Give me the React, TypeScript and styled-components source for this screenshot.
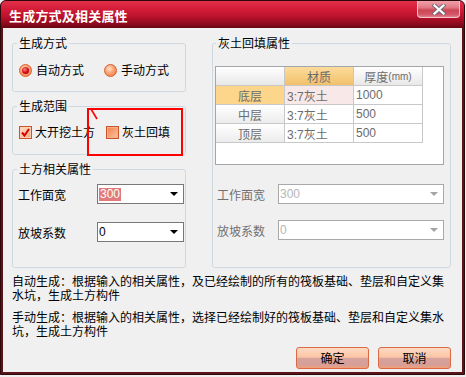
import React from 'react';
import styled, { createGlobalStyle } from 'styled-components';

const GlobalStyle = createGlobalStyle`
  html, body {
    margin: 0;
    padding: 0;
    background: #efefef;
  }
  body {
    font-family: "Liberation Sans", "Noto Sans CJK SC", sans-serif;
    font-size: 12px;
    color: #000;
  }
  * {
    box-sizing: border-box;
  }
`;

const Window = styled.div`
  width: 465px;
  height: 375px;
  display: flex;
  flex-direction: column;
  background: #5c141b;
  border: 1px solid #2e070b;
  border-radius: 6px 6px 0 0;
  overflow: hidden;
`;

const TitleBar = styled.div`
  height: 27px;
  flex: none;
  display: flex;
  align-items: flex-start;
  padding: 0 4px 0 8px;
  background: linear-gradient(to bottom, #e2304a 0%, #d41c38 30%, #ba122c 58%, #8e0a1e 84%, #6a0614 100%);
`;

const Title = styled.div`
  margin-top: 7px;
  color: #fff;
  font-family: "Noto Sans CJK SC", sans-serif;
  font-weight: 700;
  font-size: 13px;
  line-height: 16px;
  letter-spacing: 0.2px;
`;

const CloseButton = styled.div`
  margin-left: auto;
  width: 43px;
  height: 17px;
  display: flex;
  align-items: center;
  justify-content: center;
  border: 1px solid #f3c4ca;
  border-top: none;
  border-radius: 0 0 4px 4px;
  background: linear-gradient(to bottom, #f0a2aa 0%, #e27a86 40%, #cc4656 58%, #d45868 85%, #e48090 100%);
`;

const Client = styled.div`
  flex: 1;
  margin: 0 2px 2px 2px;
  background: #f0f0f0;
  padding: 8px 11px 3px 9px;
  display: flex;
  flex-direction: column;
`;

const TopArea = styled.div`
  height: 232px;
  flex: none;
  display: flex;
  gap: 26px;
`;

const LeftColumn = styled.div`
  width: 174px;
  flex: none;
  display: flex;
  flex-direction: column;
  gap: 7px;
  position: relative;
`;

const Group = styled.fieldset<{ $height?: number; $padLeft: number; $padRight: number }>`
  margin: 0;
  min-width: 0;
  padding: 0 ${p => p.$padRight}px 0 ${p => p.$padLeft}px;
  border: 1px solid #cfd8de;
  border-radius: 3px;
  ${p => (p.$height ? `height: ${p.$height}px; flex: none;` : 'flex: 1;')}
`;

const Legend = styled.legend<{ $shift?: number }>`
  padding: 0 2px;
  margin-left: ${p => p.$shift || 0}px;
  font-family: "Noto Sans CJK SC", sans-serif;
  font-size: 12px;
  line-height: 14px;
`;

const OptionRow = styled.div<{ $top: number; $gap: number }>`
  margin-top: ${p => p.$top}px;
  height: 14px;
  padding-left: 2px;
  display: flex;
  align-items: center;
  gap: ${p => p.$gap}px;
`;

const Option = styled.label<{ $gap: number }>`
  display: flex;
  align-items: center;
  gap: ${p => p.$gap}px;
  font-family: "Noto Sans CJK SC", sans-serif;
  line-height: 14px;
  white-space: nowrap;
`;

const Radio = styled.span<{ $checked?: boolean }>`
  width: 13px;
  height: 13px;
  flex: none;
  border-radius: 50%;
  display: flex;
  align-items: center;
  justify-content: center;
  border: 1px solid #d75d2b;
  background: radial-gradient(circle at 40% 35%, #ffe2cc 0%, #fba272 45%, #ee7440 100%);
  &::after {
    content: '';
    display: ${p => (p.$checked ? 'block' : 'none')};
    width: 7px;
    height: 7px;
    border-radius: 50%;
    background: radial-gradient(circle at 40% 35%, #ff8070 0%, #d00818 55%, #860008 100%);
  }
`;

const Check = styled.span<{ $checked?: boolean }>`
  width: 13px;
  height: 13px;
  flex: none;
  display: flex;
  align-items: center;
  justify-content: center;
  border: 1px solid #c9542a;
  background: ${p =>
    p.$checked
      ? 'linear-gradient(135deg, #fde0cc 0%, #f8a476 100%)'
      : 'linear-gradient(135deg, #f27e4a 0%, #fcc4a2 100%)'};
  box-shadow: inset 0 0 0 1px ${p => (p.$checked ? '#fbd0b4' : '#f9b08a')};
`;

const Mark = styled.div`
  position: absolute;
  left: 75px;
  top: 72px;
  width: 96px;
  height: 48px;
  border: 2px solid #ff0000;
  pointer-events: none;
`;

const MarkStroke = styled.svg`
  position: absolute;
  left: 0;
  top: -2px;
`;

const FieldList = styled.div<{ $top: number; $gap: number }>`
  margin-top: ${p => p.$top}px;
  display: flex;
  flex-direction: column;
  gap: ${p => p.$gap}px;
`;

const FieldRow = styled.div<{ $labelWidth: number }>`
  display: grid;
  grid-template-columns: ${p => p.$labelWidth}px 1fr;
  align-items: center;
  height: 20px;
`;

const FieldLabel = styled.span<{ $disabled?: boolean; $indent: number }>`
  padding-left: ${p => p.$indent}px;
  font-family: "Noto Sans CJK SC", sans-serif;
  color: ${p => (p.$disabled ? '#707070' : '#000')};
  white-space: nowrap;
`;

const Combo = styled.div<{ $disabled?: boolean }>`
  height: 20px;
  display: flex;
  align-items: center;
  padding: 0 5px 0 1px;
  background: #fff;
  border: 1px solid ${p => (p.$disabled ? '#a9a9a9' : '#787878')};
  font-family: "Liberation Sans", sans-serif;
  font-size: 12px;
  color: ${p => (p.$disabled ? '#b6b6b6' : '#000')};
`;

const ComboValue = styled.span`
  flex: 1;
  line-height: 14px;
`;

const Selected = styled.span`
  display: inline-block;
  padding: 0 1px;
  line-height: 13px;
  background: #e27a7a;
  color: #fff;
`;

const Arrow = styled.span<{ $disabled?: boolean }>`
  width: 0;
  height: 0;
  border-left: 4px solid transparent;
  border-right: 4px solid transparent;
  border-top: 4px solid ${p => (p.$disabled ? '#a4a4a4' : '#000')};
`;

const TableBox = styled.div`
  margin-top: 16px;
  height: 99px;
  background: #fff;
  border: 1px solid #a3a7ac;
`;

const Grid = styled.div`
  display: grid;
  width: max-content;
  grid-template-columns: repeat(3, 68px);
  grid-auto-rows: 18px;
  gap: 1px;
  background: #c8c8c8;
  border-right: 1px solid #c8c8c8;
  border-bottom: 1px solid #c8c8c8;
`;

type CellKind = 'head' | 'headActive' | 'rowHead' | 'rowHeadActive' | 'data' | 'dataActive';

const cellBg: Record<CellKind, string> = {
  head: 'linear-gradient(to bottom, #ffffff 0%, #e8e8e8 100%)',
  headActive: 'linear-gradient(to bottom, #fcdc9c 0%, #f2c06a 100%)',
  rowHead: 'linear-gradient(to bottom, #ffffff 0%, #ececec 100%)',
  rowHeadActive: '#fdd58b',
  data: '#ffffff',
  dataActive: '#f9e8e8',
};

const Cell = styled.div<{ $kind: CellKind }>`
  display: flex;
  align-items: center;
  justify-content: ${p => (p.$kind.startsWith('data') ? 'flex-start' : 'center')};
  padding-left: ${p => (p.$kind.startsWith('data') ? '2px' : '0')};
  background: ${p => cellBg[p.$kind]};
  color: #6c6c6c;
  font-size: 12px;
  white-space: nowrap;
`;

const Small = styled.span`
  font-size: 10px;
`;

/* Liberation first so the line boxes stay small; the CJK glyphs fall back to Noto */
const Notes = styled.div`
  margin-top: 7px;
  font-family: "Liberation Sans", "Noto Sans CJK SC", sans-serif;
  font-size: 12px;
  line-height: 14px;
  white-space: nowrap;
`;

const Note = styled.p`
  margin: 0;
  & + & {
    margin-top: 8px;
  }
`;

const ButtonRow = styled.div`
  margin-top: 8px;
  display: flex;
  justify-content: flex-end;
  gap: 9px;
`;

const DialogButton = styled.button`
  width: 73px;
  height: 22px;
  padding: 0;
  border: 1px solid #dc6944;
  border-radius: 3px;
  background: linear-gradient(to bottom, #fedac4 0%, #fbc5a6 46%, #d9a39d 52%, #d59e98 84%, #f0a078 100%);
  font-family: "Noto Sans CJK SC", sans-serif;
  font-size: 12px;
  line-height: 20px;
  color: #000;
`;

const tableRows: { head: string; active?: boolean; material: string; thick: string }[] = [
  { head: '底层', active: true, material: '3:7灰土', thick: '1000' },
  { head: '中层', material: '3:7灰土', thick: '500' },
  { head: '顶层', material: '3:7灰土', thick: '500' },
];

function Field({ label, value, disabled, selected, labelWidth, indent }: {
  label: string; value: string; disabled?: boolean; selected?: boolean; labelWidth: number; indent: number;
}) {
  return (
    <FieldRow $labelWidth={labelWidth}>
      <FieldLabel $disabled={disabled} $indent={indent}>{label}</FieldLabel>
      <Combo $disabled={disabled}>
        <ComboValue>{selected ? <Selected>{value}</Selected> : value}</ComboValue>
        <Arrow $disabled={disabled} />
      </Combo>
    </FieldRow>
  );
}

export default function App() {
  return (
    <>
      <GlobalStyle />
      <Window>
        <TitleBar>
          <Title>生成方式及相关属性</Title>
          <CloseButton>
            <svg width="14" height="11" viewBox="0 0 14 11">
              <path d="M2.5 1.5 L11.5 9.5 M11.5 1.5 L2.5 9.5" stroke="#6f6f78" strokeWidth="4.2" strokeLinecap="square" />
              <path d="M2.5 1.5 L11.5 9.5 M11.5 1.5 L2.5 9.5" stroke="#ffffff" strokeWidth="2.2" strokeLinecap="square" />
            </svg>
          </CloseButton>
        </TitleBar>
        <Client>
          <TopArea>
            <LeftColumn>
              <Group $height={56} $padLeft={4} $padRight={1}>
                <Legend>生成方式</Legend>
                <OptionRow $top={13} $gap={20}>
                  <Option $gap={4}><Radio $checked />自动方式</Option>
                  <Option $gap={4}><Radio />手动方式</Option>
                </OptionRow>
              </Group>
              <Group $height={56} $padLeft={4} $padRight={1}>
                <Legend>生成范围</Legend>
                <OptionRow $top={12} $gap={11}>
                  <Option $gap={3}>
                    <Check $checked>
                      <svg width="9" height="9" viewBox="0 0 9 9">
                        <path d="M1 4.5 L3.5 7.5 L8 1" stroke="#d80000" strokeWidth="2" fill="none" />
                      </svg>
                    </Check>
                    大开挖土方
                  </Option>
                  <Option $gap={3}><Check />灰土回填</Option>
                </OptionRow>
              </Group>
              <Group $padLeft={4} $padRight={1}>
                <Legend>土方相关属性</Legend>
                <FieldList $top={8} $gap={18}>
                  <Field label="工作面宽" value="300" selected labelWidth={80} indent={1} />
                  <Field label="放坡系数" value="0" labelWidth={80} indent={1} />
                </FieldList>
              </Group>
              <Mark>
                <MarkStroke width="12" height="14" viewBox="0 0 12 14">
                  <path d="M2 1 L8 11" stroke="#ff0000" strokeWidth="1.6" />
                </MarkStroke>
              </Mark>
            </LeftColumn>
            <Group $padLeft={2} $padRight={6}>
              <Legend $shift={1}>灰土回填属性</Legend>
              <TableBox>
                <Grid>
                  <Cell $kind="head" />
                  <Cell $kind="headActive">材质</Cell>
                  <Cell $kind="head">厚度<Small>(mm)</Small></Cell>
                  {tableRows.map(r => (
                    <React.Fragment key={r.head}>
                      <Cell $kind={r.active ? 'rowHeadActive' : 'rowHead'}>{r.head}</Cell>
                      <Cell $kind={r.active ? 'dataActive' : 'data'}>{r.material}</Cell>
                      <Cell $kind="data">{r.thick}</Cell>
                    </React.Fragment>
                  ))}
                </Grid>
              </TableBox>
              <FieldList $top={19} $gap={16}>
                <Field label="工作面宽" value="300" disabled labelWidth={63} indent={2} />
                <Field label="放坡系数" value="0" disabled labelWidth={63} indent={2} />
              </FieldList>
            </Group>
          </TopArea>
          <Notes>
            <Note>
              自动生成：根据输入的相关属性，及已经绘制的所有的筏板基础、垫层和自定义集<br />
              水坑，生成土方构件
            </Note>
            <Note>
              手动生成：根据输入的相关属性，选择已经绘制好的筏板基础、垫层和自定义集水<br />
              坑，生成土方构件
            </Note>
          </Notes>
          <ButtonRow>
            <DialogButton>确定</DialogButton>
            <DialogButton>取消</DialogButton>
          </ButtonRow>
        </Client>
      </Window>
    </>
  );
}
